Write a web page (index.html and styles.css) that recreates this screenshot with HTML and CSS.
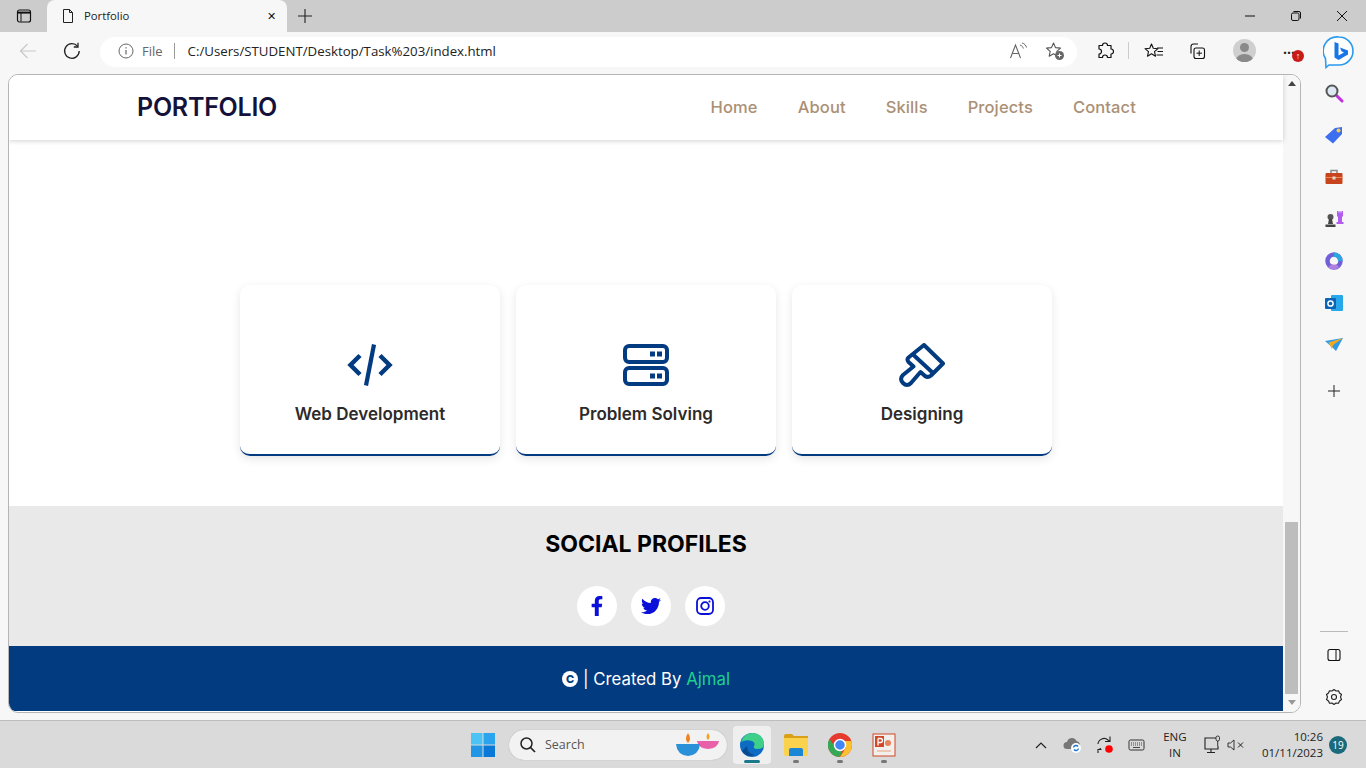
FILE: index.html
```html
<!DOCTYPE html>
<html lang="en">
<head>
  <meta charset="UTF-8">
  <title>Portfolio</title>
  <link rel="stylesheet" href="styles.css">
</head>
<body>

<div class="tabstrip">
  <svg class="tab-toggle" width="16" height="16" viewBox="0 0 16 16"><rect x="1.5" y="2" width="13" height="12" rx="2" fill="none" stroke="#111" stroke-width="1.2"/><path d="M2 4.6h12" stroke="#111" stroke-width="2"/><path d="M5 5v8.5" stroke="#111"/></svg>
  <div class="tab">
    <svg width="16" height="16" viewBox="0 0 16 16"><path d="M3.5 1.5h6l3 3v10h-9z M9.5 1.5v3h3" fill="none" stroke="#222" stroke-linejoin="round"/></svg>
    <span class="tab-title">Portfolio</span>
    <span class="tab-close">✕</span>
  </div>
  <svg class="new-tab" width="16" height="16" viewBox="0 0 16 16"><path d="M8 1v14M1 8h14" stroke="#222" stroke-width="1.1"/></svg>
  <div class="win-controls">
    <svg width="12" height="12" viewBox="0 0 12 12"><path d="M1 6h10" stroke="#111"/></svg>
    <svg width="12" height="12" viewBox="0 0 12 12"><rect x="1.5" y="3" width="7.5" height="7.5" rx="1.5" fill="none" stroke="#111"/><path d="M3.5 1.5h5.5a1.5 1.5 0 0 1 1.5 1.5v5.5" fill="none" stroke="#111"/></svg>
    <svg width="12" height="12" viewBox="0 0 12 12"><path d="M1 1l10 10M11 1L1 11" stroke="#111"/></svg>
  </div>
</div>

<div class="toolbar">
  <svg class="nav-btn" width="18" height="18" viewBox="0 0 18 18"><path d="M17 9H1.5M8.5 2L1.5 9l7 7" fill="none" stroke="#c9c9c9" stroke-width="1.2"/></svg>
  <svg class="nav-btn" width="18" height="18" viewBox="0 0 18 18"><path d="M14.6 4.4A7.3 7.3 0 1 0 16.2 9" fill="none" stroke="#222" stroke-width="1.3"/><path d="M15 .8v4.2h-4.2" fill="none" stroke="#222" stroke-width="1.3"/></svg>
  <div class="address">
    <svg width="16" height="16" viewBox="0 0 16 16"><circle cx="8" cy="8" r="7" fill="none" stroke="#666"/><path d="M8 7v4.500M8 4.200v1.300" stroke="#666" stroke-width="1.2"/></svg>
    <span class="scheme">File</span>
    <span class="addr-sep"></span>
    <span class="url">C:/Users/STUDENT/Desktop/Task%203/index.html</span>
    <svg class="read-aloud" width="20" height="18" viewBox="0 0 20 18"><path d="M1.5 16L6.5 3l5 13M3.5 11.5h6" fill="none" stroke="#666" stroke-width="1.1"/><path d="M11 3c2 .5 3 2 3.3 3.5M13 1c2.5.5 4 2.5 4.5 4.5" fill="none" stroke="#666"/></svg>
    <svg width="20" height="20" viewBox="0 0 20 20"><path d="M8.5 2l2 4.6 5 .5-3.700 3.300 1 4.800-4.300-2.500-4.300 2.500 1-4.800L1.500 7.100l5-.5z" fill="none" stroke="#555" stroke-width="1.1" stroke-linejoin="round"/><circle cx="14.5" cy="14.5" r="4.5" fill="#666"/><path d="M12.5 14.500h4M14.5 12.500v4" stroke="#fff"/></svg>
  </div>
  <div class="tools">
    <svg class="tool-ext" width="18" height="18" viewBox="0 0 18 18"><path d="M6.500 3.500a2.500 2.500 0 0 1 5 0h3.500v3.500a2.500 2.500 0 0 1 0 5V15.500h-3.500a2.500 2.500 0 0 0-5 0H3v-3.500a2.500 2.500 0 0 0 0-5V3.500z" fill="none" stroke="#111" stroke-width="1.2" stroke-linejoin="round"/></svg>
    <span class="tool-sep"></span>
    <svg class="tool-fav" width="20" height="18" viewBox="0 0 20 18"><path d="M7.500 2l1.800 4.300 4.700.4-3.500 3 1 4.500-4-2.400-4 2.400 1-4.500L1 6.700l4.700-.4z" fill="none" stroke="#111" stroke-width="1.1" stroke-linejoin="round"/><path d="M13 6h6M13.500 9.500h5.500M12.500 13h6.500" stroke="#111"/></svg>
    <svg class="tool-coll" width="18" height="18" viewBox="0 0 18 18"><path d="M3 11.500V4.500a2.500 2.500 0 0 1 2.500-2.500H10" fill="none" stroke="#111" stroke-width="1.1"/><rect x="6" y="6" width="10.5" height="10.5" rx="2" fill="none" stroke="#111" stroke-width="1.1"/><path d="M11.200 8.500v5.500M8.500 11.200H14" stroke="#111"/></svg>
    <div class="avatar"><span class="avatar-head"></span><span class="avatar-body"></span></div>
    <div class="more">
      <span class="more-dots">···</span>
      <span class="more-badge">↑</span>
    </div>
  </div>
  <svg class="bing" width="32" height="34" viewBox="0 0 32 34"><path d="M16 2a14 14 0 0 1 0 28H6l-3 2.500-.5-9A14 14 0 0 1 16 2z" fill="#fff" stroke="#2b9bf0" stroke-width="1.6"/><path d="M11.500 7l4 1.500v12l5.500-3-2.500-1.300-1.500-3.700 8 3v4L15.500 25l-4-2.500z" fill="#1976e8"/></svg>
</div>

<div class="workspace">
  <div class="viewport">
    <div class="page">
      <header class="site-nav">
        <div class="logo">PORTFOLIO</div>
        <nav class="nav-links">
          <a class="nav-link">Home</a>
          <a class="nav-link">About</a>
          <a class="nav-link">Skills</a>
          <a class="nav-link">Projects</a>
          <a class="nav-link">Contact</a>
        </nav>
      </header>

      <section class="skills">
        <div class="card">
          <svg class="card-icon" width="46" height="44" viewBox="0 0 46 44"><path d="M13 12.500L3.500 22l9.500 9.500M33 12.500L42.500 22 33 31.500" fill="none" stroke="#033b80" stroke-width="4.5"/><path d="M27 1.500l-8 41" stroke="#033b80" stroke-width="4.2"/></svg>
          <h3 class="card-title">Web Development</h3>
        </div>
        <div class="card">
          <svg class="card-icon" width="46" height="44" viewBox="0 0 46 44"><rect x="2" y="3" width="42" height="16" rx="4" fill="none" stroke="#033b80" stroke-width="4"/><rect x="2" y="25" width="42" height="16" rx="4" fill="none" stroke="#033b80" stroke-width="4"/><path d="M27 8.500h5v5h-5zM34 8.500h5v5h-5zM27 30.500h5v5h-5zM34 30.500h5v5h-5z" fill="#033b80"/></svg>
          <h3 class="card-title">Problem Solving</h3>
        </div>
        <div class="card">
          <svg class="card-icon" width="46" height="44" viewBox="0 0 46 44"><path d="M25 2L44 20.500 32 32.500Q29 35 26 33L21.500 29 12 40Q8 44 4 40 0 36 4 32L14.500 23.500 9.500 19Q7.500 16.500 9.500 14.500z" fill="none" stroke="#033b80" stroke-width="4" stroke-linejoin="round"/><path d="M14 11.500L34 30" stroke="#033b80" stroke-width="4"/></svg>
          <h3 class="card-title">Designing</h3>
        </div>
      </section>

      <section class="social">
        <h2 class="social-title">SOCIAL PROFILES</h2>
        <div class="social-links">
          <a class="social-link"><svg width="20" height="20" viewBox="0 0 320 512"><path fill="#0a10d8" d="M279.14 288l14.22-92.66h-88.91v-60.13c0-25.35 12.42-50.06 52.24-50.06h40.42V6.26S260.43 0 225.36 0c-73.22 0-121.08 44.38-121.08 124.72v70.62H22.89V288h81.39v224h100.17V288z"/></svg></a>
          <a class="social-link"><svg width="20" height="20" viewBox="0 0 512 512"><path fill="#0a10d8" d="M459.37 151.716c.325 4.548.325 9.097.325 13.645 0 138.72-105.583 298.558-298.558 298.558-59.452 0-114.68-17.219-161.137-47.106 8.447.974 16.568 1.299 25.34 1.299 49.055 0 94.213-16.568 130.274-44.832-46.132-.975-84.792-31.188-98.112-72.772 6.498.974 12.995 1.624 19.818 1.624 9.421 0 18.843-1.3 27.614-3.573-48.081-9.747-84.143-51.98-84.143-102.985v-1.299c13.969 7.797 30.214 12.67 47.431 13.319-28.264-18.843-46.781-51.005-46.781-87.391 0-19.492 5.197-37.36 14.294-52.954 51.655 63.675 129.3 105.258 216.365 109.807-1.624-7.797-2.599-15.918-2.599-24.04 0-57.828 46.782-104.934 104.934-104.934 30.213 0 57.502 12.67 76.67 33.137 23.715-4.548 46.456-13.32 66.599-25.34-7.798 24.366-24.366 44.833-46.132 57.827 21.117-2.273 41.584-8.122 60.426-16.243-14.292 20.791-32.161 39.308-52.628 54.253z"/></svg></a>
          <a class="social-link"><svg width="20" height="20" viewBox="0 0 20 20"><rect x="2" y="2" width="16" height="16" rx="4.2" fill="none" stroke="#0a10d8" stroke-width="1.8"/><circle cx="10" cy="10" r="3.8" fill="none" stroke="#0a10d8" stroke-width="1.8"/><circle cx="14.500" cy="5.500" r="1.100" fill="#0a10d8"/></svg></a>
        </div>
      </section>

      <footer class="credit">
        <span class="copy-mark">C</span>
        <span class="credit-text">| Created By <span class="credit-name">Ajmal</span></span>
      </footer>
    </div>
    <div class="scrollbar">
      <span class="arrow-up"></span>
      <span class="thumb"></span>
      <span class="arrow-down"></span>
    </div>
  </div>

  <aside class="sidebar">
    <svg width="20" height="20" viewBox="0 0 20 20"><path d="M12 12l6 6" stroke="#c030e0" stroke-width="3" stroke-linecap="round"/><circle cx="8" cy="8" r="5.500" fill="#dce9f2" stroke="#555" stroke-width="2"/></svg>
    <svg width="20" height="20" viewBox="0 0 20 20"><path d="M1 12L11 3l7-1 0 7-9 9.500z" fill="#3b6ff0"/><circle cx="14.500" cy="5.500" r="2" fill="#f7c948"/></svg>
    <svg width="20" height="20" viewBox="0 0 20 20"><path d="M7 6V3.500h6V6" fill="none" stroke="#888" stroke-width="1.5"/><rect x="1.500" y="6" width="17" height="11" rx="1" fill="#c8441c"/><path d="M1.500 10.500h17" stroke="#f08a50"/><rect x="8.500" y="9.500" width="3" height="3" fill="#ddd"/></svg>
    <svg width="20" height="20" viewBox="0 0 20 20"><path d="M13 2h1.500v1.500h1V2h1v1.500h1V2H19v5l-1 1v5h1.500v2H12.500v-2H14V8l-1-1z" fill="#b35cf0"/><circle cx="6.500" cy="8" r="3" fill="#555"/><path d="M5 10h3l1 5H4zM1.500 15.500h10V18h-10z" fill="#444"/></svg>
    <svg width="20" height="20" viewBox="0 0 20 20"><circle cx="10" cy="10" r="6.500" fill="none" stroke="#6f60d8" stroke-width="4.500"/><path d="M10 1.500A8.500 8.500 0 0 1 18.500 10H14a4 4 0 0 0-4-4z" fill="#29a8e0"/><path d="M4 16a8.500 8.500 0 0 0 11 .5L12.500 13a4 4 0 0 1-4.500 0z" fill="#b080e0"/></svg>
    <svg width="20" height="20" viewBox="0 0 20 20"><rect x="7" y="2" width="12" height="16" rx="1" fill="#28a8ea"/><rect x="1" y="5" width="11" height="11" rx="1" fill="#0a64b8"/><circle cx="6.500" cy="10.500" r="2.600" fill="none" stroke="#fff" stroke-width="1.5"/></svg>
    <svg width="20" height="20" viewBox="0 0 20 20"><path d="M1 6l18-3-7 13-3-3z" fill="#2f9be8"/><path d="M4.500 7.500L19 3 9 10l-1 4z" fill="#f2a922"/></svg>
    <svg class="side-add" width="14" height="14" viewBox="0 0 14 14"><path d="M7 1v12M1 7h12" stroke="#222"/></svg>
    <span class="side-sep"></span>
    <svg class="side-tool" width="14" height="14" viewBox="0 0 14 14"><rect x="1" y="1.500" width="12" height="11" rx="2" fill="none" stroke="#111" stroke-width="1.1"/><path d="M9 2v10" stroke="#111"/></svg>
    <svg class="side-tool" width="18" height="18" viewBox="0 0 18 18"><path d="M9 1.500l2 1.500 2.500-.3 1 2.300 2 1.500-1 2.500 1 2.500-2 1.500-1 2.300-2.500-.3-2 1.500-2-1.500-2.500.3-1-2.300-2-1.500 1-2.500-1-2.500 2-1.500 1-2.300 2.500.3z" fill="none" stroke="#222" stroke-width="1.1" stroke-linejoin="round"/><circle cx="9" cy="9" r="2.500" fill="none" stroke="#222" stroke-width="1.1"/></svg>
  </aside>
</div>

<div class="taskbar">
  <div class="task-apps">
    <svg width="24" height="24" viewBox="0 0 24 24"><path d="M0 0h11.500v11.500H0z" fill="#4cc2f5"/><path d="M12.500 0H24v11.500H12.500z" fill="#2aa4ec"/><path d="M0 12.500h11.500V24H0z" fill="#2196e4"/><path d="M12.500 12.500H24V24H12.500z" fill="#0a78d6"/></svg>
    <div class="search">
      <svg width="18" height="18" viewBox="0 0 18 18"><circle cx="7.500" cy="7.500" r="5.500" fill="none" stroke="#222" stroke-width="1.5"/><path d="M11.500 11.500L16 16" stroke="#222" stroke-width="1.7"/></svg>
      <span class="search-label">Search</span>
      <svg class="diyas" width="46" height="26" viewBox="0 0 46 26"><path d="M33 1q-3 4 0 7 3-3 0-7z" fill="#f4a020"/><path d="M22 9h22q-1 7-11 8-10-1-11-8z" fill="#e860a8"/><path d="M13 1q-4 6 0 10 4-4 0-10z" fill="#f08020"/><path d="M1 12h24q-1 11-12 12Q2 23 1 12z" fill="#2a90d8"/></svg>
    </div>
    <div class="app app-active">
      <svg width="26" height="26" viewBox="0 0 26 26"><circle cx="13" cy="13" r="12" fill="#0c6cc4"/><path d="M2 10Q5 1 14 1q9 0 11 10 .5 6-7 6-4 0-3-3 2-3-2-5-6-2-11 1z" fill="#3ed08a"/><path d="M8 14q0 8 8 9-9 3-13-4z" fill="#0a4a90"/></svg>
      <span class="app-active-bar"></span>
    </div>
    <div class="app">
      <svg width="24" height="22" viewBox="0 0 24 22"><path d="M0 2q0-2 2-2h6l2 2h14v4H0z" fill="#d9a018"/><path d="M0 4h24v16q0 2-2 2H2q-2 0-2-2z" fill="#fbd24e"/><path d="M5 22v-6q0-2 2-2h10q2 0 2 2v6z" fill="#1a86d6"/></svg>
      <span class="app-dot"></span>
    </div>
    <div class="app">
      <svg width="24" height="24" viewBox="0 0 24 24"><circle cx="12" cy="12" r="12" fill="#e53a2e"/><path d="M12 24a12 12 0 0 1-10.500-18L7 14a6 6 0 0 0 7 3.500z" fill="#35a853"/><path d="M24 12a12 12 0 0 1-12 12l5-8a6 6 0 0 0-1-8h7.500q.5 2 .5 4z" fill="#fbc02d"/><circle cx="12" cy="12" r="5.500" fill="#4285f4" stroke="#fff" stroke-width="1.5"/></svg>
      <span class="app-dot"></span>
    </div>
    <div class="app">
      <svg width="24" height="24" viewBox="0 0 24 24"><rect x="1" y="1" width="22" height="22" fill="#f2f0ec" stroke="#d24726"/><path d="M3 3h9v11H3z" fill="#d24726"/><path d="M6 5.500v7M6 5.500h2.500a2 2 0 0 1 0 4H6" fill="none" stroke="#fff" stroke-width="1.3"/><circle cx="16" cy="10" r="3" fill="#e8825c"/><path d="M5 18h14" stroke="#e8a080"/></svg>
      <span class="app-dot"></span>
    </div>
  </div>
  <div class="tray">
    <svg class="tray-chev" width="12" height="8" viewBox="0 0 12 8"><path d="M1 7l5-5 5 5" fill="none" stroke="#222" stroke-width="1.2"/></svg>
    <svg class="tray-cloud" width="20" height="18" viewBox="0 0 20 18"><path d="M4 13a3.500 3.500 0 0 1 0-7 5 5 0 0 1 9.500-1 4 4 0 0 1 3 6v2z" fill="#777"/><circle cx="13" cy="12" r="5" fill="#fff"/><path d="M10.500 11.500a2.500 2.500 0 0 1 4.500-1M15.500 12.500a2.500 2.500 0 0 1-4.500 1" fill="none" stroke="#1a78d0" stroke-width="1.4"/></svg>
    <svg class="tray-sync" width="18" height="18" viewBox="0 0 18 18"><path d="M2 8a6 6 0 0 1 10-4l2 1.500M14 .5v5h-5M5 12.500L1.500 14M2 17v-3.500h3.500" fill="none" stroke="#222" stroke-width="1.1"/><circle cx="13" cy="13" r="3.800" fill="#f00"/></svg>
    <svg class="tray-kb" width="18" height="14" viewBox="0 0 18 14"><rect x="1" y="2" width="15" height="10" rx="1.500" fill="none" stroke="#222" stroke-width=".9"/><path d="M3 5h11M3 7h11" stroke="#444" stroke-dasharray="1 1"/><path d="M5 9.500h7" stroke="#444"/></svg>
    <div class="lang"><span>ENG</span><span>IN</span></div>
    <svg class="tray-net" width="20" height="20" viewBox="0 0 20 20"><path d="M13 3H2v11h13v-3M8 14v3M4 17.500h8" fill="none" stroke="#222" stroke-width="1.1"/><rect x="13" y="1" width="3.500" height="5" rx="1.700" fill="none" stroke="#222" stroke-width=".9"/><path d="M14.700 6v5" stroke="#222" stroke-width=".9"/></svg>
    <svg class="tray-vol" width="18" height="14" viewBox="0 0 18 14"><path d="M1 5h2.500L7 2v10L3.500 9H1z" fill="none" stroke="#222" stroke-width=".9"/><path d="M11 4.500l5 5M16 4.500l-5 5" stroke="#222"/></svg>
    <div class="clock"><span>10:26</span><span>01/11/2023</span></div>
    <span class="notif">19</span>
  </div>
</div>

</body>
</html>
```

FILE: styles.css
```css
* {
  box-sizing: border-box;
}

html, body {
  margin: 0;
  height: 100%;
  overflow: hidden;
}

body {
  width: 1366px;
  height: 768px;
  display: flex;
  flex-direction: column;
  background-color: #f7f7f7;
  font-family: "Open Sans", "Noto Sans", sans-serif;
}

svg {
  display: block;
  flex: none;
}

/* browser chrome */
.tabstrip {
  height: 32px;
  flex: none;
  display: flex;
  align-items: center;
  background-color: #cccccc;
  padding-left: 16px;
}

.tab {
  width: 240px;
  height: 32px;
  margin-left: 15px;
  padding: 0 11px 1px 13px;
  display: flex;
  align-items: center;
  background-color: #f7f7f7;
  border-radius: 8px 8px 0 0;
}

.tab-title {
  margin-left: 8px;
  flex: 1;
  font-size: 11.3px;
  color: #222;
}

.tab-close {
  font-size: 11px;
  color: #111;
}

.new-tab {
  margin-left: 10px;
}

.win-controls {
  margin-left: auto;
  display: flex;
  gap: 34px;
  padding-right: 18px;
}

.toolbar {
  height: 41px;
  flex: none;
  display: flex;
  align-items: center;
  padding: 0 0 2px 19px;
}

.nav-btn {
  margin-bottom: 2px;
}

.nav-btn + .nav-btn {
  margin-left: 26px;
}

.address {
  width: 977px;
  height: 30px;
  margin-left: 19px;
  padding: 0 12px 2px 18px;
  display: flex;
  align-items: center;
  background-color: #fff;
  border-radius: 15px;
}

.scheme {
  margin-left: 8px;
  font-size: 13px;
  color: #666;
}

.addr-sep {
  width: 1px;
  height: 16px;
  margin: 0 13px 0 11px;
  background-color: #999;
}

.url {
  flex: 1;
  font-size: 13.25px;
  color: #222;
}

.read-aloud {
  margin-right: 16px;
}

.tools {
  width: 247px;
  display: flex;
  align-items: center;
  padding: 0 0 2px 19px;
}

.tool-sep {
  width: 1px;
  height: 17px;
  margin: 0 15px 0 14px;
  background-color: #ccc;
}

.tool-coll {
  margin-left: 24px;
}

.avatar {
  width: 23px;
  height: 23px;
  margin-left: 27px;
  position: relative;
  overflow: hidden;
  border-radius: 50%;
  background-color: #cfcfcf;
}

.avatar-head {
  position: absolute;
  left: 7px;
  top: 4px;
  width: 9px;
  height: 9px;
  border-radius: 50%;
  background-color: #8a8a8a;
}

.avatar-body {
  position: absolute;
  left: 3px;
  top: 15px;
  width: 17px;
  height: 12px;
  border-radius: 50%;
  background-color: #8a8a8a;
}

.more {
  margin-left: 27px;
  position: relative;
  width: 24px;
  height: 20px;
}

.more-dots {
  font-size: 14px;
  font-weight: 700;
  line-height: 16px;
  color: #222;
}

.more-badge {
  position: absolute;
  left: 9px;
  top: 9px;
  width: 12px;
  height: 12px;
  border-radius: 50%;
  background-color: #c81a1a;
  color: #fff;
  font-size: 9px;
  font-weight: 700;
  line-height: 12px;
  text-align: center;
}

.bing {
  margin-left: -1px;
}

.workspace {
  flex: 1;
  min-height: 0;
  display: flex;
  padding-left: 8px;
}

.viewport {
  width: 1293px;
  height: 639px;
  margin-top: 1px;
  display: flex;
  overflow: hidden;
  background-color: #fff;
  border: 1px solid #b5b5b5;
  border-radius: 10px;
}

.page {
  flex: 1;
  min-width: 0;
  font-family: Inter, "Open Sans", sans-serif;
}

.scrollbar {
  width: 17px;
  flex: none;
  display: flex;
  flex-direction: column;
  align-items: center;
  background-color: #f7f7f7;
  padding: 6px 0 7px;
}

.arrow-up {
  border: 4px solid transparent;
  border-top: 0;
  border-bottom: 5px solid #444;
}

.thumb {
  width: 13px;
  height: 172px;
  margin-top: auto;
  margin-bottom: 6px;
  background-color: #bdbdbd;
}

.arrow-down {
  border: 4px solid transparent;
  border-bottom: 0;
  border-top: 5px solid #999;
}

/* portfolio page */
.site-nav {
  height: 65px;
  display: flex;
  align-items: center;
  justify-content: space-between;
  padding: 0 147px 2px 128px;
  background-color: #fff;
  box-shadow: 0 1px 5px rgba(0, 0, 0, 0.18);
  position: relative;
}

.logo {
  font-size: 25px;
  font-weight: 600;
  letter-spacing: -0.25px;
  color: #14123a;
}

.nav-links {
  display: flex;
  gap: 40px;
}

.nav-link {
  font-size: 16.5px;
  font-weight: 500;
  letter-spacing: 0.12px;
  color: #ab9075;
}

.skills {
  height: 366px;
  padding-top: 145px;
  display: flex;
  justify-content: center;
  gap: 16px;
}

.card {
  width: 260px;
  height: 171px;
  display: flex;
  flex-direction: column;
  align-items: center;
  padding-top: 58px;
  background-color: #fff;
  border-bottom: 2px solid #033b80;
  border-radius: 10px;
  box-shadow: 0 3px 10px rgba(0, 0, 0, 0.1);
}

.card-title {
  margin: 15px 0 0;
  font-size: 17px;
  font-weight: 600;
  line-height: 24px;
  color: #2d2a2a;
}

.social {
  height: 140px;
  padding-top: 22px;
  display: flex;
  flex-direction: column;
  align-items: center;
  background-color: #e9e9e9;
}

.social-title {
  margin: 0;
  font-size: 23px;
  font-weight: 700;
  line-height: 32px;
  color: #000;
}

.social-links {
  margin-top: 26px;
  padding-left: 10px;
  display: flex;
  gap: 14px;
}

.social-link {
  width: 40px;
  height: 40px;
  display: flex;
  align-items: center;
  justify-content: center;
  border-radius: 50%;
  background-color: #fff;
}

.credit {
  height: 65px;
  display: flex;
  align-items: center;
  justify-content: center;
  gap: 5px;
  background-color: #033b80;
  color: #fff;
  font-size: 16.8px;
}

.copy-mark {
  width: 16px;
  height: 16px;
  border-radius: 50%;
  background-color: #fff;
  color: #033b80;
  font-size: 11px;
  font-weight: 800;
  line-height: 16px;
  text-align: center;
}

.credit-name {
  color: #1ed28e;
}

/* edge sidebar */
.sidebar {
  width: 65px;
  display: flex;
  flex-direction: column;
  align-items: center;
  padding-top: 10px;
  gap: 22px;
}

.side-add {
  margin-top: 7px;
}

.side-sep {
  width: 28px;
  height: 1px;
  margin-top: 211px;
  margin-bottom: -6px;
  background-color: #bbb;
}

.side-tool + .side-tool {
  margin-top: 4px;
}

/* windows taskbar */
.taskbar {
  height: 48px;
  flex: none;
  display: flex;
  align-items: center;
  justify-content: space-between;
  padding-left: 471px;
  background-color: #dadada;
  border-top: 1px solid #bdbdbd;
}

.task-apps {
  display: flex;
  align-items: center;
}

.search {
  width: 218px;
  height: 30px;
  margin-left: 14px;
  padding: 0 6px 0 10px;
  display: flex;
  align-items: center;
  background-color: #f2f2f2;
  border-radius: 15px;
  box-shadow: 0 0 1px #999;
}

.search-label {
  margin-left: 8px;
  flex: 1;
  font-size: 12.5px;
  color: #555;
}

.app {
  width: 38px;
  height: 38px;
  margin-left: 6px;
  position: relative;
  display: flex;
  align-items: center;
  justify-content: center;
  border-radius: 4px;
}

.app-active {
  margin-left: 6px;
  background-color: #efefef;
}

.app-active-bar {
  position: absolute;
  left: 11px;
  bottom: 1px;
  width: 16px;
  height: 3px;
  border-radius: 2px;
  background-color: #1a7a8c;
}

.app-dot {
  position: absolute;
  left: 16px;
  bottom: 1px;
  width: 6px;
  height: 3px;
  border-radius: 2px;
  background-color: #777;
}

.tray {
  display: flex;
  align-items: center;
  padding-right: 19px;
}

.tray-cloud {
  margin-left: 16px;
}

.tray-sync {
  margin-left: 13px;
}

.tray-kb {
  margin-left: 14px;
}

.lang {
  width: 30px;
  margin-left: 14px;
  display: flex;
  flex-direction: column;
  align-items: center;
  font-size: 11.5px;
  line-height: 16px;
  color: #222;
}

.tray-net {
  margin-left: 13px;
}

.tray-vol {
  margin-left: 4px;
}

.clock {
  margin-left: 17px;
  display: flex;
  flex-direction: column;
  align-items: flex-end;
  font-size: 11.5px;
  line-height: 16px;
  color: #222;
}

.notif {
  width: 18px;
  height: 18px;
  margin-left: 6px;
  border-radius: 50%;
  background-color: #1a6a7c;
  color: #fff;
  font-size: 10px;
  line-height: 18px;
  text-align: center;
}
```
